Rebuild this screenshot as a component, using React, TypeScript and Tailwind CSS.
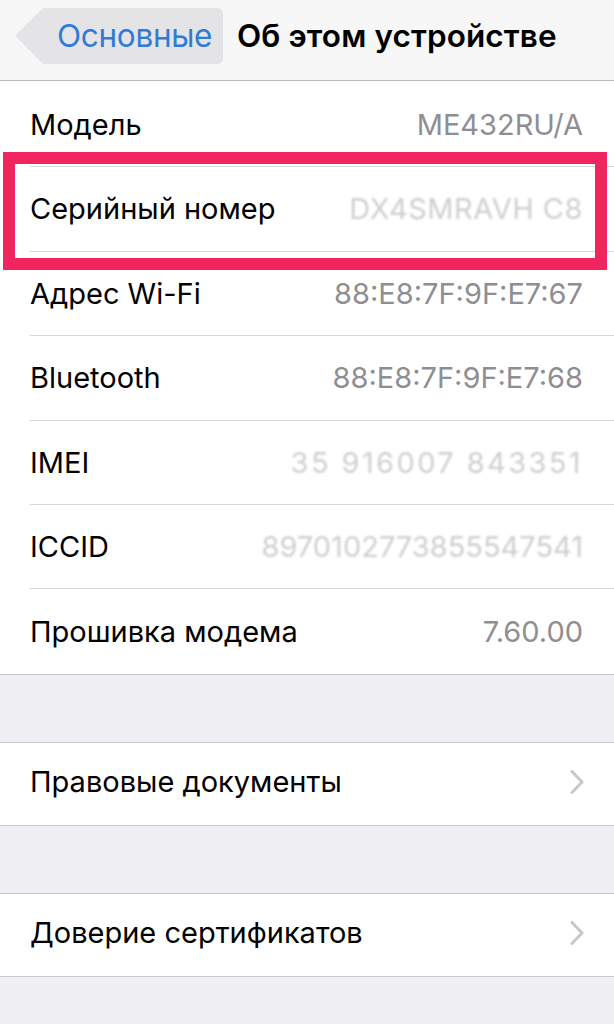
import React from "react";

const Chevron = () => (
  <svg width="14" height="24" viewBox="0 0 14 24" className="shrink-0 -mt-[4px]">
    <polyline points="2,1.5 12,12 2,22.5" fill="none" stroke="#c7c7cc" strokeWidth="3" strokeLinecap="round" strokeLinejoin="round" />
  </svg>
);

type Row = { label: string; value?: string; blurred?: string };

const rows: Row[] = [
  { label: "Модель", value: "ME432RU/A" },
  { label: "Серийный номер", value: "DX4SMRAVH C8", blurred: "tracking-[0.5px]" },
  { label: "Адрес Wi-Fi", value: "88:E8:7F:9F:E7:67" },
  { label: "Bluetooth", value: "88:E8:7F:9F:E7:68" },
  { label: "IMEI", value: "35 916007 843351", blurred: "tracking-[2.4px]" },
  { label: "ICCID", value: "8970102773855547541", blurred: "tracking-[0px]" },
  { label: "Прошивка модема", value: "7.60.00" },
];

export default function App() {
  return (
    <div className="relative w-[614px] h-[1024px] overflow-hidden bg-[#efeff4] font-['Inter','Liberation_Sans',sans-serif] text-[29px] text-black">
      {/* Nav bar */}
      <div className="h-[81px] bg-[#f7f7f7] border-b border-[#b8b8b8] flex items-center">
        <div className="relative ml-[15px] w-[208px] h-[56px] flex items-center -mt-[9px]">
          <svg className="absolute inset-0" width="208" height="56" viewBox="0 0 208 56">
            <path d="M0 27.5 L28 0 H202 Q208 0 208 6 V50 Q208 56 202 56 H28 Z" fill="#e4e4e6" />
          </svg>
          <span className="relative pl-[42px] text-[#2f7bd6] text-[31.5px] tracking-[-0.3px]">Основные</span>
        </div>
        <span className="ml-[14px] -mt-[9px] font-semibold text-[31.5px] tracking-[0.1px]">Об этом устройстве</span>
      </div>

      {/* Group 1 */}
      <div className="bg-white border-b border-[#c8c7cc] pt-[2px]">
        {rows.map((r, i) => (
          <div
            key={r.label}
            className={
              "ml-[30px] pr-[31px] h-[84.4px] flex items-center justify-between " +
              (i < rows.length - 1 ? "border-b border-[#d6d6da]" : "")
            }
          >
            <span>{r.label}</span>
            {r.blurred ? (
              <span className={"text-[#cfcfd3] blur-[0.8px] " + r.blurred}>{r.value}</span>
            ) : (
              <span className="text-[#8e8e93]">{r.value}</span>
            )}
          </div>
        ))}
      </div>

      {/* Group 2 */}
      <div className="mt-[67px] bg-white border-y border-[#c8c7cc]">
        <div className="pl-[30px] pr-[30px] h-[82px] flex items-center justify-between">
          <span className="-mt-[4px]">Правовые документы</span>
          <Chevron />
        </div>
      </div>

      {/* Group 3 */}
      <div className="mt-[67px] bg-white border-y border-[#c8c7cc]">
        <div className="pl-[30px] pr-[30px] h-[82px] flex items-center justify-between">
          <span className="-mt-[4px]">Доверие сертификатов</span>
          <Chevron />
        </div>
      </div>

      {/* Highlight box */}
      <div className="absolute left-[3px] top-[152px] w-[604px] h-[118px] border-[12px] border-[#f2245f]" />
    </div>
  );
}
